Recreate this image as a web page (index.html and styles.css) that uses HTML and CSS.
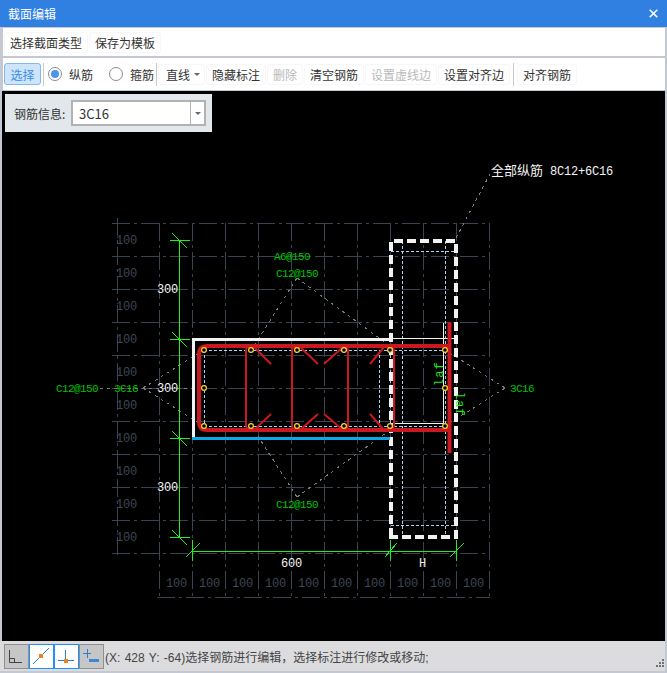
FILE: index.html
```html
<!DOCTYPE html>
<html lang="zh">
<head>
<meta charset="utf-8">
<title>截面编辑</title>
<link rel="stylesheet" href="styles.css">
</head>
<body>
<div class="window">
  <header class="titlebar">
    <span class="title">截面编辑</span>
    <svg class="close" width="9" height="9" viewBox="0 0 9 9"><path d="M.7.7l7.6 7.6M8.3.7L.7 8.3"/></svg>
  </header>
  <nav class="menu">
    <button class="tb">选择截面类型</button>
    <button class="tb">保存为模板</button>
  </nav>
  <div class="toolbar">
    <button class="tb active">选择</button>
    <span class="sep"></span>
    <label class="radio first"><span class="dot on"></span>纵筋</label>
    <label class="radio second"><span class="dot"></span>箍筋</label>
    <span class="sep"></span>
    <button class="tb line">直线<span class="caret"></span></button>
    <button class="tb">隐藏标注</button>
    <button class="tb off">删除</button>
    <button class="tb">清空钢筋</button>
    <button class="tb off">设置虚线边</button>
    <button class="tb">设置对齐边</button>
    <span class="sep wide"></span>
    <button class="tb">对齐钢筋</button>
  </div>
  <main class="canvas">
    <svg class="drawing" width="663" height="550" viewBox="2 91 663 550">
      <g class="grid">
        <path d="M112 223H490M112 256H490M112 289H490M112 322H490M112 355H490M112 388H490M112 421H490M112 454H490M112 487H490M112 520H490M112 553H490M157 597H490"/>
        <path d="M117 218V558M159 223V600M192 223V600M225 223V600M258 223V600M291 223V600M324 223V600M357 223V600M390 223V600M423 223V600M456 223V600M489 223V600"/>
      </g>
      <g class="dimgray">
        <text x="116" y="244">100</text><text x="116" y="277">100</text><text x="116" y="310">100</text><text x="116" y="343">100</text><text x="116" y="376">100</text><text x="116" y="409">100</text><text x="116" y="442">100</text><text x="116" y="475">100</text><text x="116" y="508">100</text><text x="116" y="541">100</text>
        <text x="166" y="587">100</text><text x="199" y="587">100</text><text x="232" y="587">100</text><text x="265" y="587">100</text><text x="298" y="587">100</text><text x="331" y="587">100</text><text x="364" y="587">100</text><text x="397" y="587">100</text><text x="430" y="587">100</text><text x="463" y="587">100</text>
      </g>
      <g class="leader">
        <path d="M297 278L254 346M297 278L390 346M297 497L254 430M297 497L390 430M100 388H204M143 388L204 350M143 388L204 426M505 388L445 350M505 388L445 426M456 238L491 172"/>
      </g>
      <g class="inner">
        <path d="M402 241V537M445 241V537M391 251H456M391 525H456M204 350H445M204 426H445M204 350V426M379 350V426M390 350V426"/>
      </g>
      <path class="column" d="M391 537V241H456V537Z"/>
      <path class="face" d="M390 339H193V437"/>
      <path class="faceb" d="M192 438H390"/>
      <path class="thin" d="M390 338H456M443 323V423H390"/>
      <g class="rebar">
        <path class="main" d="M449.500 322V453M449 346H207Q199 346 199 354V422Q199 430 207 430H449"/>
        <rect class="stir" x="246" y="346" width="102" height="84" rx="5"/>
        <rect class="stir" x="292" y="346" width="102" height="84" rx="5"/>
        <path class="hook" d="M254 347L271 364M300 347L318 364M343 347L324 364M384 347L370 364M254 430L271 414M300 430L318 414M343 430L324 414M384 430L370 414"/>
      </g>
      <g class="bars">
        <circle cx="204" cy="350" r="2.400"/><circle cx="251" cy="350" r="2.400"/><circle cx="297" cy="350" r="2.400"/><circle cx="344" cy="350" r="2.400"/><circle cx="390" cy="350" r="2.400"/><circle cx="445" cy="350" r="2.400"/><circle cx="204" cy="388" r="2.400"/><circle cx="445" cy="388" r="2.400"/><circle cx="204" cy="426" r="2.400"/><circle cx="251" cy="426" r="2.400"/><circle cx="297" cy="426" r="2.400"/><circle cx="344" cy="426" r="2.400"/><circle cx="390" cy="426" r="2.400"/><circle cx="445" cy="426" r="2.400"/>
      </g>
      <g class="dim">
        <path d="M179 240V537M170 240H190M170 339H190M170 438H190M170 537H190M172 233L187 248M172 332L187 347M172 431L187 446M172 530L187 545"/>
        <path d="M192 551H456M192 540V561M390 540V561M456 540V561M186 557L200 543M385 557L397 543M450 557L464 543"/>
      </g>
      <g class="white">
        <text x="157" y="293">300</text><text x="157" y="392">300</text><text x="157" y="491">300</text>
        <text x="281" y="567">600</text><text x="419" y="567">H</text>
        <text x="491" y="175"><tspan class="cjk">全部纵筋</tspan><tspan x="550">8C12+6C16</tspan></text>
      </g>
      <g class="green">
        <text x="274" y="260">A6@150</text>
        <text x="276" y="277">C12@150</text>
        <text x="276" y="508">C12@150</text>
        <text x="56" y="392">C12@150</text>
        <text x="114" y="392">3C16</text>
        <text x="510" y="392">3C16</text>
        <text class="laf" transform="translate(443 386) rotate(-90)">laf</text>
        <text class="laf" transform="translate(456 392) rotate(90)">laf</text>
      </g>
    </svg>
    <div class="info">
      <span class="info-label">钢筋信息:</span>
      <div class="combo">
        <span class="combo-value">3C16</span>
        <span class="combo-btn"><span class="caret"></span></span>
      </div>
    </div>
  </main>
  <footer class="status">
    <div class="snap">
      <svg width="25" height="25" viewBox="0 0 25 25"><path class="ic" d="M5.500 6V18.500H18M5.500 14.500H10.500V18.500"/></svg>
    </div>
    <div class="snap on">
      <svg width="25" height="25" viewBox="0 0 25 25"><path class="ib" d="M4 20L20 4"/><rect class="io" x="10" y="10" width="4" height="4"/></svg>
    </div>
    <div class="snap on">
      <svg width="25" height="25" viewBox="0 0 25 25"><path class="ib" d="M4 16.500H20"/><path class="ib" d="M11.500 6V16"/><rect class="io" x="10" y="15" width="4" height="4"/></svg>
    </div>
    <div class="snap">
      <svg width="25" height="25" viewBox="0 0 25 25"><path class="ib" d="M4 9.500H12M8.500 5V14"/><rect class="is" x="10" y="15" width="10" height="3"/></svg>
    </div>
    <span class="status-text">(X: 428 Y: -64)选择钢筋进行编辑，选择标注进行修改或移动;</span>
    <svg class="grip" width="10" height="10" viewBox="0 0 10 10"><path d="M7 0h2v2H7zM4 3h2v2H4zM7 3h2v2H7zM1 6h2v2H1zM4 6h2v2H4zM7 6h2v2H7z"/></svg>
  </footer>
</div>
</body>
</html>
```
FILE: styles.css
```css
* { box-sizing: border-box; }
html, body { margin: 0; padding: 0; }
body { font-family: "Noto Sans CJK SC", "Liberation Sans", sans-serif; font-size: 12px; color: #333; }

.window {
  width: 667px; height: 673px;
  display: flex; flex-direction: column;
  background: #c3c8d2;
  overflow: hidden;
}

.titlebar {
  height: 27px; flex: none;
  display: flex; align-items: center; justify-content: space-between;
  padding: 0 6px 0 8px;
  background: #2f80e1;
  color: #fff;
}
.title { font-size: 12px; }
.close { margin-right: 3px; }
.close path { stroke: #fff; stroke-width: 1.600; fill: none; }

.menu {
  height: 28px; flex: none;
  margin: 1px 2px 0 3px;
  display: flex; align-items: center;
  padding-left: 1px;
  background: #fff;
}
.toolbar {
  height: 32px; flex: none;
  margin: 2px 2px 0 3px;
  display: flex; align-items: center;
  padding-left: 1px;
  background: #fff;
}

.tb {
  height: 21px; padding: 0 5px;
  border: 1px solid #f7f7f7; border-radius: 3px;
  background: #fff; color: #333;
  font: 12px "Noto Sans CJK SC", "Liberation Sans", sans-serif;
  line-height: 19px;
  display: flex; align-items: center;
  white-space: nowrap;
  margin-right: 1px;
}
.tb.active {
  width: 37px; height: 22px; padding: 0;
  justify-content: center;
  background: #cde4fb; border-color: #7fb8f2;
  color: #3b8ee6;
}
.tb.off { color: #b9b9b9; }
.tb.line { width: 47px; padding: 0 0 0 7px; }
.caret {
  width: 0; height: 0;
  border-left: 3px solid transparent; border-right: 3px solid transparent;
  border-top: 3px solid #666;
  flex: none;
}
.tb.line .caret { margin-left: 4px; }

.sep { width: 1px; height: 23px; background: #c9c9c9; margin: 0 1px; flex: none; }
.sep.wide { margin: 0 3px 0 2px; }

.radio { display: flex; align-items: center; color: #333; }
.radio.first { margin-left: 3px; width: 46px; }
.radio.second { margin-left: 15px; width: 46px; }
.dot {
  width: 14px; height: 14px; border-radius: 50%;
  border: 1px solid #8a8a8a; background: #fff;
  margin-right: 7px; flex: none;
  display: flex; align-items: center; justify-content: center;
}
.dot.on::after { content: ""; width: 8px; height: 8px; border-radius: 50%; background: #4a95ea; }

.canvas {
  flex: 1; min-height: 0;
  margin: 1px 2px 0 2px;
  background: #000;
  position: relative;
}
.drawing { display: block; }

.grid path { stroke: #3b4250; stroke-width: 1; fill: none; stroke-dasharray: 18 4 3 4; shape-rendering: crispEdges; }
.dimgray text { fill: #3f4654; font: 12px "Liberation Mono", monospace; letter-spacing: -.2px; }
.leader path { stroke: #7c7c7c; fill: none; stroke-dasharray: 3 4; shape-rendering: crispEdges; }
.inner path { stroke: #a8d2f5; fill: none; stroke-dasharray: 3 2; shape-rendering: crispEdges; }
.column { stroke: #f2f2f2; stroke-width: 4; fill: none; stroke-dasharray: 9 4; shape-rendering: crispEdges; }
.face { stroke: #f2f2f2; stroke-width: 3; fill: none; shape-rendering: crispEdges; }
.faceb { stroke: #0ea7e6; stroke-width: 3; fill: none; shape-rendering: crispEdges; }
.thin { stroke: #f2f2f2; stroke-width: 1; fill: none; shape-rendering: crispEdges; }
.main { stroke: #c9181f; stroke-width: 4; fill: none; }
.stir { stroke: #c9181f; stroke-width: 2; fill: none; }
.hook { stroke: #c9181f; stroke-width: 2; fill: none; }
.bars circle { stroke: #ffd83c; stroke-width: 1.200; fill: #000; }
.dim path { stroke: #22ee22; stroke-width: 1; fill: none; shape-rendering: crispEdges; }
.white text { fill: #f4f4f4; font: 12px "Liberation Mono", "Noto Sans CJK SC", monospace; letter-spacing: -.2px; }
.white .cjk { font-size: 13px; letter-spacing: 0; }
.green text { fill: #00c400; font: 11px "Liberation Mono", monospace; letter-spacing: -.6px; }
.green .laf { font: 12px "Liberation Mono", monospace; letter-spacing: 1px; fill: #1fe41f; }

.info {
  position: absolute; left: 3px; top: 3px;
  width: 207px; height: 38px;
  background: #e1e7ea;
  display: flex; align-items: center;
  padding-left: 9px;
}
.info-label { width: 57px; color: #333; }
.combo {
  width: 135px; height: 26px;
  border: 2px solid #b2b2b2;
  background: #fff;
  display: flex; align-items: center; justify-content: space-between;
}
.combo-value { padding-left: 6px; font-size: 13px; color: #333; }
.combo-btn {
  width: 14px; height: 100%;
  border-left: 1px solid #b2b2b2;
  display: flex; align-items: center; justify-content: center;
}

.status {
  height: 30px; flex: none;
  margin: 0 2px 2px 0;
  background: #dcdcdf;
  display: flex; align-items: center;
  padding-left: 4px;
  position: relative;
}
.snap {
  width: 25px; height: 25px; flex: none;
  background: #c6c6c6;
  border: 1px solid #8f8f8f;
  display: flex; align-items: center; justify-content: center;
}
.snap svg { flex: none; }
.snap.on { background: #fff; border: 1px solid #1e90ff; }
.ic { stroke: #444; stroke-width: 1; fill: none; }
.ib { stroke: #2a7fd4; stroke-width: 1; fill: none; }
.io { fill: #f08020; }
.is { fill: #3f86d6; }
.status-text { margin-left: 1px; white-space: nowrap; color: #444; word-spacing: 1px; font-family: "Liberation Sans", "Noto Sans CJK SC", sans-serif; }
.grip { position: absolute; right: 0; bottom: 2px; }
.grip path { fill: #6c7278; }
```
